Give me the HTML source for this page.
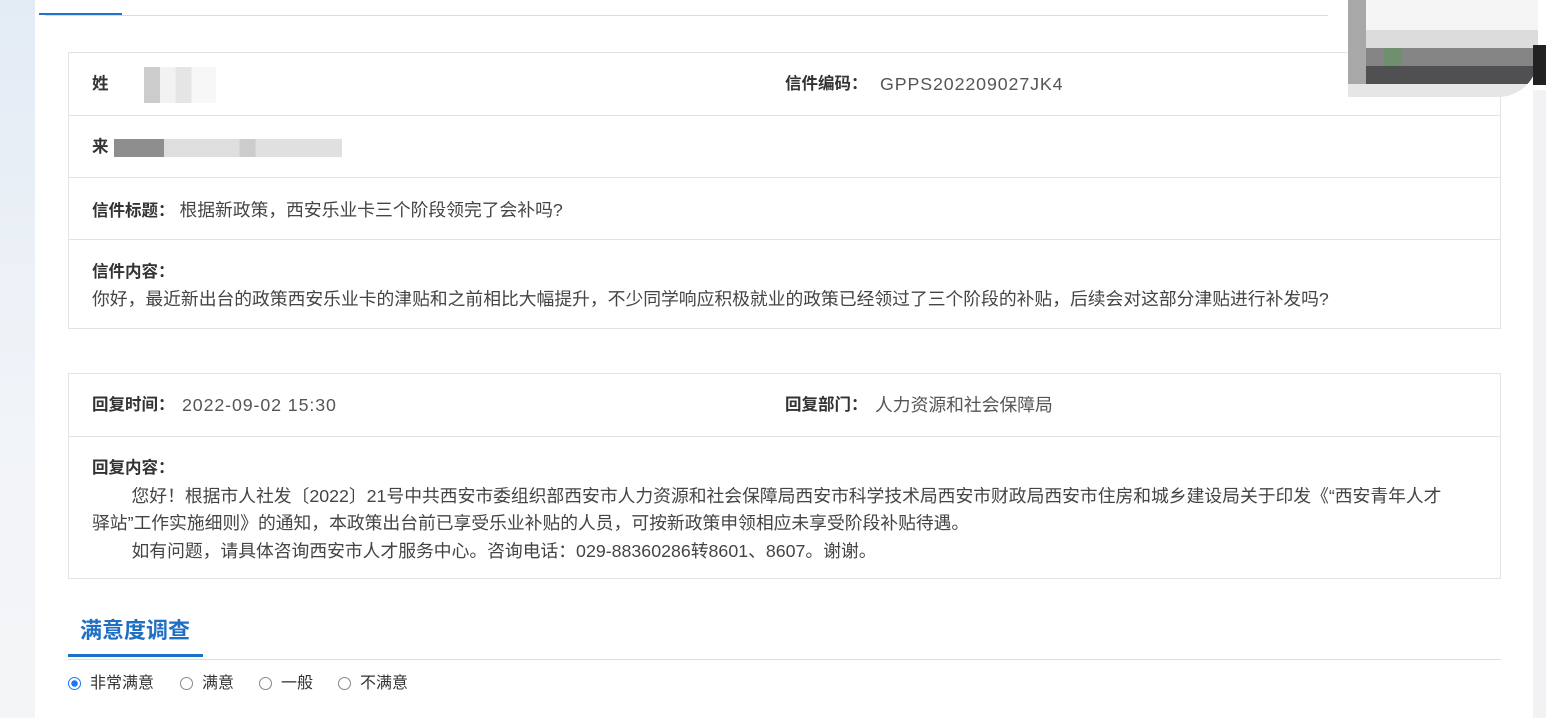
<!DOCTYPE html>
<html><head><meta charset="utf-8"><style>
*{margin:0;padding:0;box-sizing:border-box}
body{width:1546px;height:718px;overflow:hidden;background:#fff;font-family:"Liberation Sans","Noto Sans CJK SC",sans-serif;color:#555;position:relative;font-size:17.8px}
.ab{position:absolute}
.box{position:absolute;left:68px;width:1433px;border:1px solid #e3e3e3}
.row{border-top:1px solid #e3e3e3;position:relative;height:62px}
.row:first-child{border-top:none}
.row span.l{position:absolute;top:19px;line-height:24px;font-weight:bold;color:#333;font-size:16.5px}
.v{position:absolute;top:19px;line-height:24px;color:#555}
.num{letter-spacing:0.9px}
.t{position:absolute;top:19px;left:23px;color:#444;line-height:27.5px}
b{color:#333;font-size:16.5px}
.rad{position:absolute;top:5px;width:13px;height:13px;border:1px solid #888;border-radius:50%}
.rt{position:absolute;top:1px;line-height:22px}
</style></head><body>
<div class="ab" style="left:0;top:0;width:35px;height:718px;background:linear-gradient(#e3ebf5,#f1f4f8 60%,#f4f5f7)"></div>
<div class="ab" style="left:1533px;top:90px;width:13px;height:628px;background:#f2f2f4"></div>
<div class="ab" style="left:45px;top:15px;width:1283px;height:1px;background:#ddd"></div>
<div class="ab" style="left:39px;top:13px;width:83px;height:2px;background:#1f73c9"></div>
<div class="ab" style="left:1348px;top:0;width:190px;height:97px;background:#f5f5f6;border-radius:0 0 40px 0;overflow:hidden;z-index:2">
<div class="ab" style="left:0;top:30px;width:190px;height:18px;background:#dcdcdc"></div>
<div class="ab" style="left:0;top:48px;width:190px;height:18px;background:#858585"></div>
<div class="ab" style="left:36px;top:48px;width:18px;height:18px;background:#6f8f6e"></div>
<div class="ab" style="left:0;top:66px;width:190px;height:18px;background:#505052"></div>
<div class="ab" style="left:0;top:84px;width:190px;height:13px;background:#e6e6e6"></div>
<div class="ab" style="left:0;top:0;width:18px;height:84px;background:#a8a8a8"></div>
</div>
<div class="ab" style="left:1533px;top:45px;width:13px;height:40px;background:#222;z-index:3"></div>

<div class="box" style="top:52px">
 <div class="row"><span class="l" style="left:23px">姓</span>
  <div class="ab" style="left:75px;top:14px;width:72px;height:36px;background:linear-gradient(90deg,#ccc 0 22%,#f2f2f2 22% 44%,#e5e5e5 44% 66%,#f7f7f7 66%)"></div>
  <span class="l" style="left:716px">信件编码：</span><span class="v num" style="left:811px">GPPS202209027JK4</span></div>
 <div class="row"><span class="l" style="left:23px">来</span>
  <div class="ab" style="left:45px;top:23px;width:228px;height:18px;background:linear-gradient(90deg,#8e8e8e 0 22%,#dedede 22% 55%,#ccc 55% 62%,#e0e0e0 62%)"></div></div>
 <div class="row"><span class="t"><b>信件标题：</b>&nbsp;根据新政策，西安乐业卡三个阶段领完了会补吗?</span></div>
 <div class="row" style="height:89px"><span class="t" style="top:18px;line-height:27px"><b>信件内容：</b><br>你好，最近新出台的政策西安乐业卡的津贴和之前相比大幅提升，不少同学响应积极就业的政策已经领过了三个阶段的补贴，后续会对这部分津贴进行补发吗?</span></div>
</div>

<div class="box" style="top:373px">
 <div class="row"><span class="l" style="left:23px">回复时间：</span><span class="v num" style="left:113px">2022-09-02 15:30</span>
 <span class="l" style="left:716px">回复部门：</span><span class="v" style="left:806px">人力资源和社会保障局</span></div>
 <div class="row" style="height:142px"><span class="t" style="top:17px;white-space:nowrap"><b>回复内容：</b><br>&nbsp;&nbsp;&nbsp;&nbsp;&nbsp;&nbsp;&nbsp;&nbsp;您好！根据市人社发〔2022〕21号中共西安市委组织部西安市人力资源和社会保障局西安市科学技术局西安市财政局西安市住房和城乡建设局关于印发《“西安青年人才<br>驿站”工作实施细则》的通知，本政策出台前已享受乐业补贴的人员，可按新政策申领相应未享受阶段补贴待遇。<br>&nbsp;&nbsp;&nbsp;&nbsp;&nbsp;&nbsp;&nbsp;&nbsp;如有问题，请具体咨询西安市人才服务中心。咨询电话：029-88360286转8601、8607。谢谢。</span></div>
</div>

<div class="ab" style="left:80px;top:613px;font-size:22px;font-weight:bold;color:#1f6fc4">满意度调查</div>
<div class="ab" style="left:68px;top:659px;width:1433px;height:1px;background:#ddd"></div>
<div class="ab" style="left:68px;top:654px;width:135px;height:3px;background:#1f6fc4"></div>
<div class="ab" style="left:0;top:672px;font-size:16px;color:#333;white-space:nowrap;width:600px;height:24px">
<span class="rad" style="left:68px;border:1px solid #1677ff;background:radial-gradient(#1677ff 0 3px,#fff 3.5px)"></span><span class="rt" style="left:90px">非常满意</span>
<span class="rad" style="left:180px"></span><span class="rt" style="left:202px">满意</span>
<span class="rad" style="left:259px"></span><span class="rt" style="left:281px">一般</span>
<span class="rad" style="left:338px"></span><span class="rt" style="left:360px">不满意</span>
</div>
</body></html>
